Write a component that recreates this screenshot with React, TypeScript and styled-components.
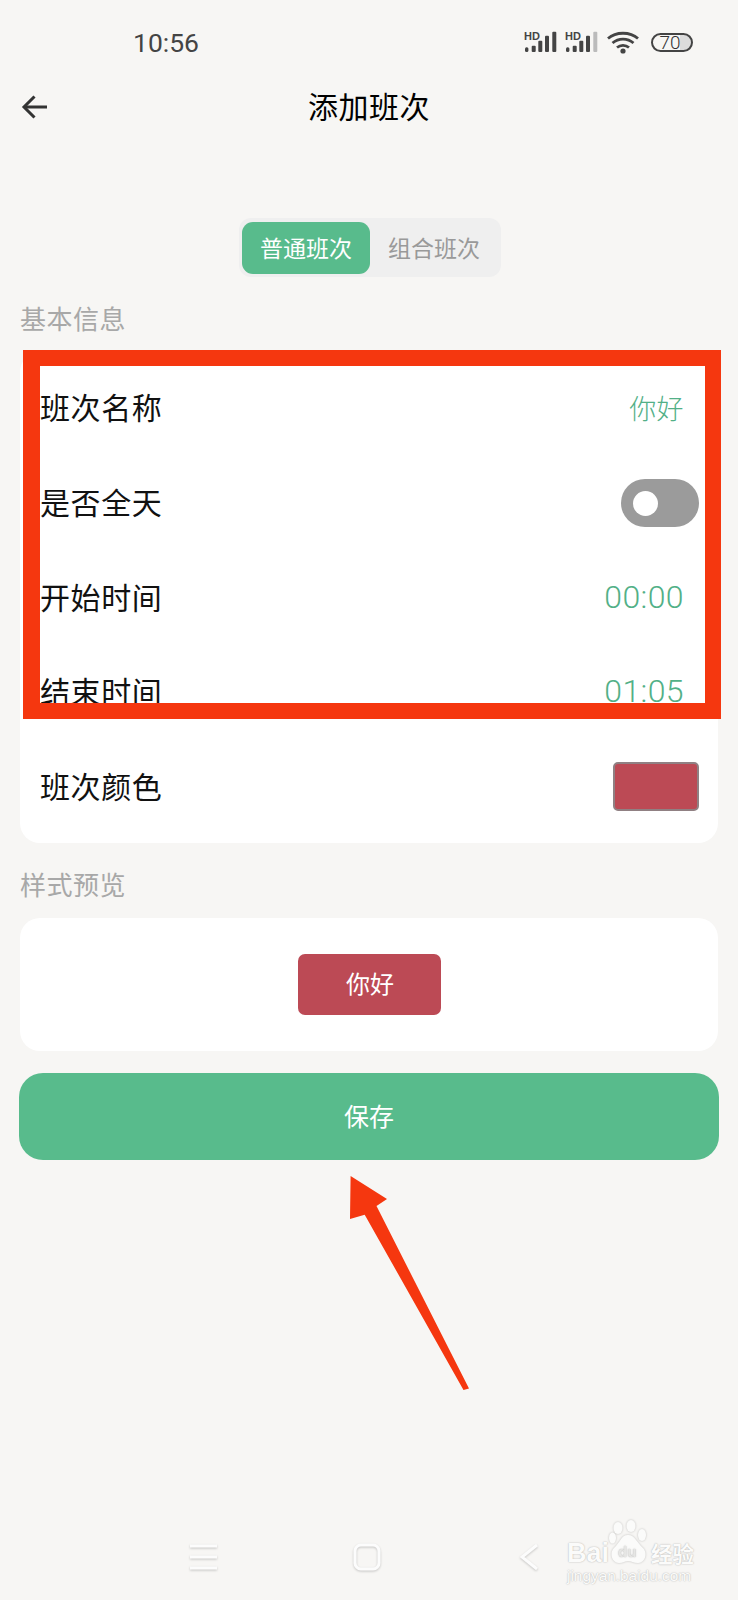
import React from 'react';
import styled, { createGlobalStyle } from 'styled-components';

const GlobalStyle = createGlobalStyle`
  html, body {
    margin: 0;
    padding: 0;
    background: #f7f6f4;
  }
  * {
    box-sizing: border-box;
  }
`;

const CJK = `"Noto Sans CJK SC", "Noto Sans", sans-serif`;
const GREEN = '#58bb8c';
const RED = '#f5370f';

const Page = styled.div`
  position: relative;
  width: 738px;
  height: 1600px;
  overflow: hidden;
  display: flex;
  flex-direction: column;
  background: #f7f6f4;
  font-family: ${CJK};
`;

const StatusBar = styled.div`
  height: 84px;
  padding: 0 45px 0 133px;
  display: flex;
  align-items: center;
  justify-content: space-between;
`;

const Clock = styled.span`
  font-family: Roboto, sans-serif;
  font-size: 26.5px;
  color: #444;
`;

const StatusIcons = styled.div`
  display: flex;
  align-items: center;
`;

const SignalSvg = styled.svg`
  width: 36px;
  height: 22px;
  margin-right: 5px;
`;

const WifiSvg = styled.svg`
  width: 32px;
  height: 23px;
  margin: 0 12px 0 2px;
`;

const Battery = styled.div`
  width: 42px;
  height: 19px;
  border: 2px solid #444;
  border-radius: 10px;
  display: flex;
  align-items: center;
  justify-content: center;
  padding-right: 4px;
  font-family: Roboto, sans-serif;
  font-size: 19px;
  font-weight: 300;
  color: #333;
  background: linear-gradient(to right, transparent 70%, #dcdcdc 70%);
`;

const Header = styled.div`
  height: 46px;
  padding: 0 21px;
  position: relative;
  display: flex;
  align-items: center;
  justify-content: center;
`;

const BackButton = styled.svg`
  position: absolute;
  left: 21px;
  top: 11px;
  width: 26px;
  height: 24px;
`;

const Title = styled.h1`
  margin: 0 0 4px;
  font-size: 30px;
  font-weight: 400;
  letter-spacing: 0.5px;
  color: #000;
  line-height: 42px;
`;

const Segment = styled.div`
  align-self: flex-start;
  margin: 88px 0 0 239px;
  width: 262px;
  height: 59px;
  padding: 4px 3px 3px;
  display: flex;
  background: #efefef;
  border-radius: 12px;
`;

const SegmentItem = styled.div<{ $active?: boolean }>`
  width: 128px;
  padding-bottom: 2px;
  display: flex;
  align-items: center;
  justify-content: center;
  font-size: 23px;
  border-radius: 11px;
  color: ${(p) => (p.$active ? '#fff' : '#999')};
  background: ${(p) => (p.$active ? GREEN : 'transparent')};
`;

const SectionLabel = styled.div<{ $top: number }>`
  margin: ${(p) => p.$top}px 0 0 20px;
  height: 36px;
  line-height: 32px;
  font-size: 26px;
  letter-spacing: 0.5px;
  color: #a8a8a8;
`;

const Card = styled.div`
  margin: 14px 20px 0;
  padding: 9px 19px 9px 20px;
  background: #fff;
  border-radius: 20px;
`;

const Row = styled.div`
  height: 94.7px;
  display: flex;
  align-items: center;
  justify-content: space-between;
`;

const RowLabel = styled.span`
  margin-bottom: 4px;
  font-size: 30px;
  letter-spacing: 0.6px;
  color: #111;
`;

const RowValue = styled.span<{ $size: number }>`
  margin: 0 15px 2px 0;
  font-family: Roboto, ${CJK};
  font-size: ${(p) => p.$size}px;
  font-weight: 300;
  letter-spacing: 0.4px;
  color: #52b087;
`;

const Toggle = styled.div`
  width: 78px;
  height: 48px;
  padding-left: 12px;
  display: flex;
  align-items: center;
  background: #9b9b9b;
  border-radius: 24px;
`;

const Knob = styled.div`
  width: 25px;
  height: 25px;
  background: #fff;
  border-radius: 50%;
`;

const Swatch = styled.div`
  width: 86px;
  height: 49px;
  margin-bottom: 2px;
  background: #bc4a55;
  border: 2px solid #908083;
  border-radius: 5px;
`;

const PreviewCard = styled.div`
  margin: 14px 20px 0;
  height: 133px;
  display: flex;
  align-items: center;
  justify-content: center;
  background: #fff;
  border-radius: 20px;
`;

const PreviewChip = styled.div`
  width: 143px;
  height: 61px;
  padding: 0 0 4px 2px;
  display: flex;
  align-items: center;
  justify-content: center;
  font-size: 24px;
  color: #fff;
  background: #bc4a55;
  border-radius: 7px;
`;

const SaveButton = styled.button`
  margin: 22px 19px 0;
  height: 87px;
  border: 0;
  padding: 0 0 4px;
  font-family: ${CJK};
  font-size: 25px;
  color: #fff;
  background: ${GREEN};
  border-radius: 24px;
`;

const NavBar = styled.div`
  margin-top: auto;
  height: 57px;
  padding: 0 200px 30px 190px;
  display: flex;
  align-items: center;
  justify-content: space-between;
`;

const NavIcon = styled.svg`
  height: 28px;
  filter: drop-shadow(0 1px 1px rgba(0, 0, 0, 0.2));
`;

const HomeIcon = styled(NavIcon)`
  margin-right: 4px;
`;

// 截图上后加的红框和箭头，盖在内容上面
const Highlight = styled.div`
  position: absolute;
  left: 23px;
  top: 350px;
  width: 698px;
  height: 369px;
  border: 16px solid ${RED};
  border-left-width: 17px;
`;

const Arrow = styled.svg`
  position: absolute;
  left: 340px;
  top: 1170px;
  width: 140px;
  height: 225px;
`;

const Watermark = styled.div`
  position: absolute;
  left: 567px;
  top: 1519px;
  width: 134px;
  color: #fbfbfa;
  text-shadow: 0 0 1.5px rgba(0, 0, 0, 0.35);
`;

const LogoLine = styled.div`
  height: 48px;
  display: flex;
  align-items: flex-end;
  font-family: "Liberation Sans", sans-serif;
  font-weight: 700;
  font-size: 27px;
  line-height: 27px;
`;

const LogoCn = styled.span`
  margin-left: 2px;
  font-family: ${CJK};
  font-size: 21.5px;
  line-height: 28px;
`;

const PawSvg = styled.svg`
  width: 40px;
  height: 48px;
  filter: drop-shadow(0 0 1px rgba(0, 0, 0, 0.22));
`;

const Domain = styled.div`
  margin-top: 1px;
  font-family: "Liberation Sans", sans-serif;
  font-size: 15.4px;
  line-height: 16px;
  white-space: nowrap;
`;

const Signal: React.FC<{ dim?: boolean }> = ({ dim }) => (
  <SignalSvg viewBox="0 0 36 22">
    <text x="1" y="9" fontFamily="Liberation Sans, sans-serif" fontWeight="700" fontSize="11" fill="#444">
      HD
    </text>
    <rect x="2" y="16.3" width="3.4" height="4.7" rx="1.5" fill="#444" />
    <rect x="8.7" y="14.7" width="4" height="6.3" rx="1" fill="#444" />
    <rect x="15.3" y="9.7" width="4" height="11.3" rx="1" fill="#444" />
    <rect x="22" y="4.7" width="4" height="16.3" rx="1" fill="#444" />
    <rect x="29.3" y="0.7" width="4" height="20.3" rx="1" fill={dim ? '#bbb' : '#444'} />
  </SignalSvg>
);

const App: React.FC = () => {
  return (
    <Page>
      <GlobalStyle />
      <StatusBar>
        <Clock>10:56</Clock>
        <StatusIcons>
          <Signal />
          <Signal dim />
          <WifiSvg viewBox="0 0 32 23" fill="none" stroke="#444" strokeWidth="2.8">
            <path d="M1 7.5C9 0.5 23 0.5 31 7.5" />
            <path d="M5.5 12C11.5 6.8 20.5 6.8 26.5 12" />
            <path d="M10 16.5C13.5 13.6 18.5 13.6 22 16.5" />
            <circle cx="16" cy="20" r="2.6" fill="#444" stroke="none" />
          </WifiSvg>
          <Battery>70</Battery>
        </StatusIcons>
      </StatusBar>

      <Header>
        <BackButton viewBox="0 0 26 24" fill="none" stroke="#333" strokeWidth="3">
          <path d="M26 12H3" />
          <path d="M13.5 1.5L3 12l10.5 10.5" />
        </BackButton>
        <Title>添加班次</Title>
      </Header>

      <Segment>
        <SegmentItem $active>普通班次</SegmentItem>
        <SegmentItem>组合班次</SegmentItem>
      </Segment>

      <SectionLabel $top={25}>基本信息</SectionLabel>
      <Card>
        <Row>
          <RowLabel>班次名称</RowLabel>
          <RowValue $size={27}>你好</RowValue>
        </Row>
        <Row>
          <RowLabel>是否全天</RowLabel>
          <Toggle>
            <Knob />
          </Toggle>
        </Row>
        <Row>
          <RowLabel>开始时间</RowLabel>
          <RowValue $size={32}>00:00</RowValue>
        </Row>
        <Row>
          <RowLabel>结束时间</RowLabel>
          <RowValue $size={32}>01:05</RowValue>
        </Row>
        <Row>
          <RowLabel>班次颜色</RowLabel>
          <Swatch />
        </Row>
      </Card>

      <SectionLabel $top={25}>样式预览</SectionLabel>
      <PreviewCard>
        <PreviewChip>你好</PreviewChip>
      </PreviewCard>

      <SaveButton>保存</SaveButton>

      <NavBar>
        <NavIcon width="27" viewBox="0 0 27 28" stroke="#fcfcfc" strokeWidth="3">
          <path d="M0 3h27M0 14h27M0 25h27" />
        </NavIcon>
        <HomeIcon width="28" viewBox="0 0 28 28" fill="none" stroke="#fcfcfc" strokeWidth="3">
          <rect x="2" y="2" width="24" height="24" rx="6" />
        </HomeIcon>
        <NavIcon width="18" viewBox="0 0 18 28" fill="none" stroke="#fcfcfc" strokeWidth="3">
          <path d="M17 2L2 14l15 12" />
        </NavIcon>
      </NavBar>

      <Highlight />
      <Arrow viewBox="340 1170 140 225">
        <path
          fill={RED}
          d="M350.6 1176L387 1199 376.5 1206 469 1388.6 463.5 1390 364.7 1214.7 350 1219Z"
        />
      </Arrow>

      <Watermark>
        <LogoLine>
          Bai
          <PawSvg viewBox="0 0 40 48" fill="#fbfbfa">
            <ellipse cx="9" cy="9" rx="4.5" ry="6" />
            <ellipse cx="22" cy="7" rx="4.5" ry="6" />
            <ellipse cx="33" cy="16" rx="4" ry="6" />
            <ellipse cx="3.5" cy="19" rx="3.5" ry="5.5" />
            <path d="M19 16C12 16 11 24 5 29 0 34 3 44 10 44 14 44 16 42 19 42 22 42 25 44 29 44 36 44 39 34 34 29 28 24 26 16 19 16Z" />
            <text x="9" y="38" fontFamily="Liberation Sans, sans-serif" fontWeight="700" fontSize="15" fill="#e6e6e4">
              du
            </text>
          </PawSvg>
          <LogoCn>经验</LogoCn>
        </LogoLine>
        <Domain>jingyan.baidu.com</Domain>
      </Watermark>
    </Page>
  );
};

export default App;
